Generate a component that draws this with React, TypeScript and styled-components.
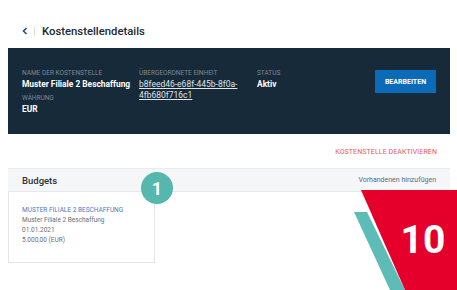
import React from "react";
import styled, { createGlobalStyle } from "styled-components";

const Global = createGlobalStyle`
  html, body { margin: 0; padding: 0; background: #ffffff; }
  body { font-family: Roboto, "Liberation Sans", sans-serif; width: 457px; height: 290px; overflow: hidden; position: relative; }
  * { box-sizing: border-box; }
`;

const Page = styled.div`
  position: relative;
  width: 457px;
  height: 290px;
  overflow: hidden;
`;

const TitleRow = styled.div`
  display: flex;
  align-items: center;
  height: 18px;
  margin-top: 22px;
  padding-left: 22px;
  gap: 6px;
`;

const Back = styled.span`
  display: flex;
  align-items: center;
  color: #1d4f8a;
`;

const Sep = styled.span`
  width: 1px;
  height: 9px;
  background: #d8dde3;
`;

const Title = styled.h1`
  margin: 0 0 0 1px;
  font-size: 11.3px;
  font-weight: 500;
  color: #222a33;
`;

const Panel = styled.section`
  margin: 8px 7px 0 8px;
  background: #172a3a;
  padding: 20px 14px 20px 14px;
  display: flex;
  height: 86px;
`;

const Col = styled.div<{ $w?: number }>`
  display: flex;
  flex-direction: column;
  width: ${(p) => (p.$w ? `${p.$w}px` : "auto")};
  flex: ${(p) => (p.$w ? "none" : "1")};
`;

const Label = styled.div<{ $gap?: boolean }>`
  font-size: 6.5px;
  line-height: 10px;
  color: #7b8896;
  text-transform: uppercase;
  white-space: nowrap;
  margin-top: ${(p) => (p.$gap ? "3px" : "0")};
`;

const Value = styled.div`
  font-size: 8.4px;
  line-height: 12px;
  font-weight: 700;
  color: #ffffff;
  white-space: nowrap;
`;

const LinkValue = styled.a`
  font-size: 8.5px;
  line-height: 10px;
  color: #dfe5ea;
  text-decoration: underline;
  white-space: nowrap;
  margin-top: 1px;
`;

const Button = styled.button`
  margin-top: 2px;
  width: 61px;
  height: 23px;
  border: none;
  background: #0b6bb8;
  color: #ffffff;
  font-family: Roboto, "Liberation Sans", sans-serif;
  font-weight: 700;
  font-size: 7px;
  padding: 0;
`;

const ActionRow = styled.div`
  display: flex;
  justify-content: flex-end;
  padding-right: 20px;
  margin-top: 12px;
  height: 12px;
  align-items: center;
`;

const Danger = styled.span`
  font-size: 7px;
  color: #e8565c;
  text-transform: uppercase;
  letter-spacing: 0.1px;
`;

const Budgets = styled.section`
  position: relative;
  margin: 10px 7px 0 8px;
`;

const BudgetHead = styled.div`
  height: 24px;
  background: #f5f6f8;
  border-top: 1px solid #e9ebee;
  border-bottom: 1px solid #e6e8eb;
  display: flex;
  align-items: center;
  justify-content: space-between;
  padding: 0 14px;
`;

const BudgetTitle = styled.span`
  font-size: 9.5px;
  font-weight: 500;
  color: #2a323b;
`;

const AddLink = styled.span`
  font-size: 7px;
  color: #5a6b80;
`;

const Card = styled.div`
  width: 147px;
  height: 71px;
  border: 1px solid #e3e5e8;
  border-top: none;
  padding: 13px 13px;
  display: flex;
  flex-direction: column;
`;

const CardLine = styled.div<{ $accent?: boolean }>`
  font-size: 6.5px;
  line-height: 10px;
  color: ${(p) => (p.$accent ? "#4b7dc0" : "#6a6f75")};
  text-transform: ${(p) => (p.$accent ? "uppercase" : "none")};
`;

const Marker = styled.div`
  position: absolute;
  left: 133px;
  top: 4px;
  width: 32px;
  height: 32px;
  border-radius: 50%;
  background: #55b7ae;
  color: #ffffff;
  font-weight: 700;
  font-size: 18px;
  display: flex;
  align-items: center;
  justify-content: center;
`;

const Corner = styled.svg`
  position: absolute;
  left: 340px;
  top: 185px;
`;

const CornerNumber = styled.div`
  position: absolute;
  left: 399px;
  top: 215px;
  width: 48px;
  text-align: center;
  font-size: 39px;
  font-weight: 700;
  color: #ffffff;
  line-height: 50px;
`;

export default function App() {
  return (
    <Page>
      <Global />
      <TitleRow>
        <Back>
          <svg width="6" height="8" viewBox="0 0 6 8">
            <path d="M4.5 1 L1.5 4 L4.5 7" stroke="currentColor" strokeWidth="1.6" fill="none" />
          </svg>
        </Back>
        <Sep />
        <Title>Kostenstellendetails</Title>
      </TitleRow>
      <Panel>
        <Col $w={117}>
          <Label>Name der Kostenstelle</Label>
          <Value>Muster Filiale 2 Beschaffung</Value>
          <Label $gap>Währung</Label>
          <Value>EUR</Value>
        </Col>
        <Col $w={118}>
          <Label>Übergeordnete Einheit</Label>
          <LinkValue>b8feed46-e68f-445b-8f0a-</LinkValue>
          <LinkValue>4fb680f716c1</LinkValue>
        </Col>
        <Col>
          <Label>Status</Label>
          <Value>Aktiv</Value>
        </Col>
        <Button>BEARBEITEN</Button>
      </Panel>
      <ActionRow>
        <Danger>Kostenstelle deaktivieren</Danger>
      </ActionRow>
      <Budgets>
        <BudgetHead>
          <BudgetTitle>Budgets</BudgetTitle>
          <AddLink>Vorhandenen hinzufügen</AddLink>
        </BudgetHead>
        <Card>
          <CardLine $accent>Muster Filiale 2 Beschaffung</CardLine>
          <CardLine>Muster Filiale 2 Beschaffung</CardLine>
          <CardLine>01.01.2021</CardLine>
          <CardLine>5.000,00 (EUR)</CardLine>
        </Card>
        <Marker>1</Marker>
      </Budgets>
      <Corner width="117" height="105" viewBox="0 0 117 105">
        <polygon points="14,27 27,27 65,105 50,105" fill="#5dbdb6" />
        <polygon points="21,5 117,5 117,105 65,105" fill="#e4002b" />
      </Corner>
      <CornerNumber>10</CornerNumber>
    </Page>
  );
}
